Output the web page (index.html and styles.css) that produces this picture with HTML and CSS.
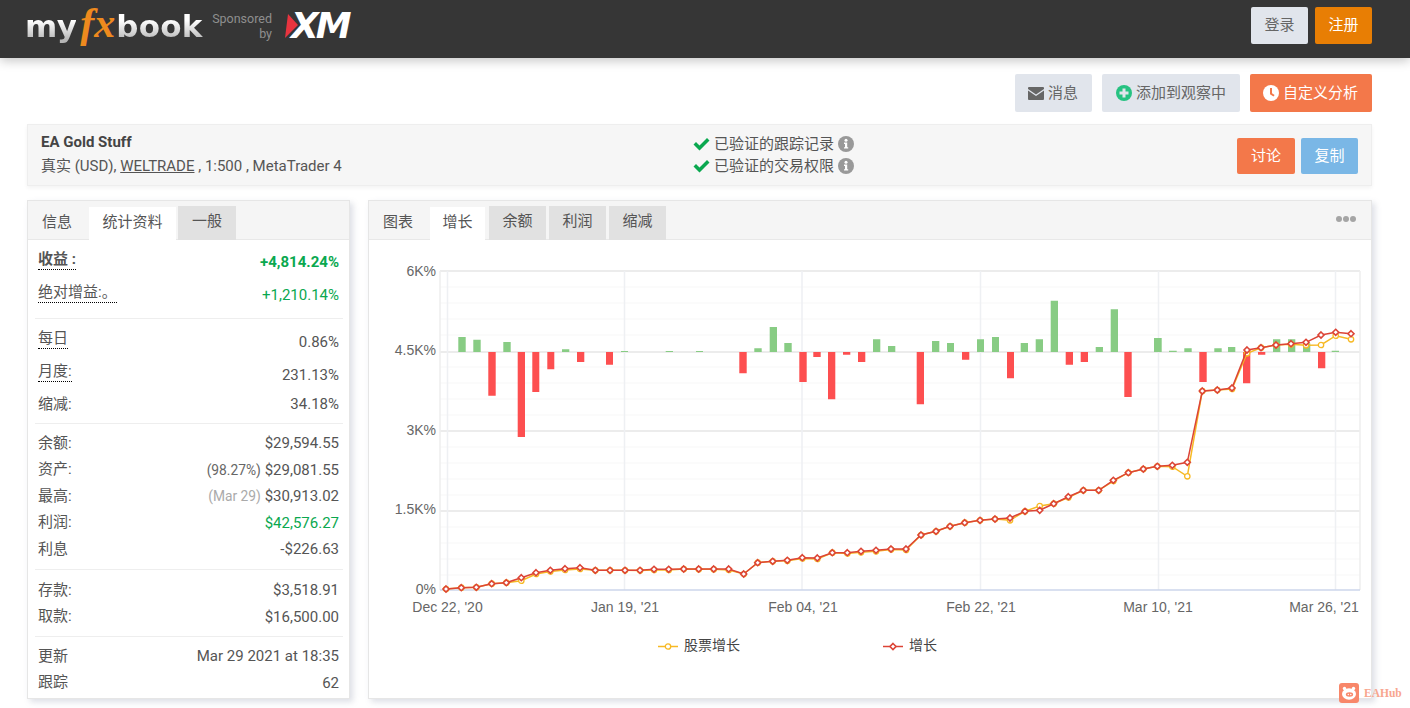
FILE: index.html
```html
<!DOCTYPE html>
<html lang="zh">
<head>
    <meta charset="UTF-8">
    <title>EA Gold Stuff - myfxbook</title>
    <link rel="stylesheet" href="styles.css">
</head>
<body>
    <header class="topbar">
        <div class="brand">
            <div class="logo"><span class="logo-word">my</span><span class="logo-fx">fx</span><span class="logo-word logo-book">book</span></div>
            <div class="sponsor">Sponsored<br>by</div>
            <div class="xm">
                <svg class="xm-mark" width="14" height="24" viewBox="0 0 14 24"><path d="M3 0 13 11 0 24Z" fill="#e8343f"/></svg>
                <span class="xm-text">XM</span>
            </div>
        </div>
        <div class="topbar-actions">
            <button class="btn btn-grey btn-top">登录</button>
            <button class="btn btn-amber btn-top">注册</button>
        </div>
    </header>

    <main class="page">
        <div class="actions">
            <button class="btn btn-grey btn-action">
                <svg width="16" height="13" viewBox="0 0 16 13"><path d="M1 0H15A1 1 0 0 1 16 1V2L8 7.4 0 2V1A1 1 0 0 1 1 0Z M0 3.6 8 9 16 3.6V12A1 1 0 0 1 15 13H1A1 1 0 0 1 0 12Z" fill="#666"/></svg>
                消息
            </button>
            <button class="btn btn-grey btn-action btn-watch">
                <svg width="16" height="16" viewBox="0 0 16 16"><circle cx="8" cy="8" r="8" fill="#26c281"/><path d="M6.5 3.5H9.5V6.5H12.5V9.5H9.5V12.5H6.5V9.5H3.5V6.5H6.5Z" fill="#e1e5ec"/></svg>
                添加到观察中
            </button>
            <button class="btn btn-coral btn-action">
                <svg width="16" height="16" viewBox="0 0 16 16"><circle cx="8" cy="8" r="8" fill="#fff"/><path d="M7 3H9V8.2L11.6 10 10.5 11.6 7 9.2Z" fill="#f3784a"/></svg>
                自定义分析
            </button>
        </div>

        <section class="summary">
            <div class="summary-info">
                <div class="summary-name">EA Gold Stuff</div>
                <div>真实 (USD), <span class="broker">WELTRADE</span> , 1:500 , MetaTrader 4</div>
            </div>
            <div class="summary-checks">
                <div class="check-row">
                    <svg width="17" height="14" viewBox="0 0 17 14"><path d="M0.5 7.5 3 5 6.5 8.5 14 1 16.5 3.5 6.5 13.5Z" fill="#0aa84f"/></svg>
                    已验证的跟踪记录
                    <svg class="info-icon" width="16" height="16" viewBox="0 0 16 16"><circle cx="8" cy="8" r="8" fill="#999"/><circle cx="8" cy="4.2" r="1.5" fill="#fff"/><path d="M6 6.6H9.2V11.2H10.2V12.6H6V11.2H7V8H6Z" fill="#fff"/></svg>
                </div>
                <div class="check-row">
                    <svg width="17" height="14" viewBox="0 0 17 14"><path d="M0.5 7.5 3 5 6.5 8.5 14 1 16.5 3.5 6.5 13.5Z" fill="#0aa84f"/></svg>
                    已验证的交易权限
                    <svg class="info-icon" width="16" height="16" viewBox="0 0 16 16"><circle cx="8" cy="8" r="8" fill="#999"/><circle cx="8" cy="4.2" r="1.5" fill="#fff"/><path d="M6 6.6H9.2V11.2H10.2V12.6H6V11.2H7V8H6Z" fill="#fff"/></svg>
                </div>
            </div>
            <div class="summary-buttons">
                <button class="btn btn-coral btn-small">讨论</button>
                <button class="btn btn-blue btn-small btn-copy">复制</button>
            </div>
        </section>

        <div class="columns">
            <section class="panel">
                <div class="tabs">
                    <span class="tab tab-plain">信息</span>
                    <span class="tab tab-active tab-stats">统计资料</span>
                    <span class="tab tab-grey tab-wide">一般</span>
                </div>
                <div class="stats">
                    <div class="group group-a">
                        <div class="row row-tall"><span class="label dotted strong">收益 :</span><span class="value up strong">+4,814.24%</span></div>
                        <div class="row row-tall"><span class="label dotted">绝对增益:。</span><span class="value up">+1,210.14%</span></div>
                    </div>
                    <div class="group group-b">
                        <div class="row row-tall"><span class="label dotted">每日</span><span class="value">0.86%</span></div>
                        <div class="row row-tall"><span class="label dotted">月度:</span><span class="value">231.13%</span></div>
                        <div class="row row-short"><span class="label">缩减:</span><span class="value">34.18%</span></div>
                    </div>
                    <div class="group group-c">
                        <div class="row"><span class="label">余额:</span><span class="value">$29,594.55</span></div>
                        <div class="row"><span class="label">资产:</span><span class="value"><small class="note">(98.27%)</small> $29,081.55</span></div>
                        <div class="row"><span class="label">最高:</span><span class="value"><small class="note note-light">(Mar 29)</small> $30,913.02</span></div>
                        <div class="row"><span class="label">利润:</span><span class="value up">$42,576.27</span></div>
                        <div class="row"><span class="label">利息</span><span class="value">-$226.63</span></div>
                    </div>
                    <div class="group group-d">
                        <div class="row"><span class="label">存款:</span><span class="value">$3,518.91</span></div>
                        <div class="row"><span class="label">取款:</span><span class="value">$16,500.00</span></div>
                    </div>
                    <div class="group group-e">
                        <div class="row"><span class="label">更新</span><span class="value">Mar 29 2021 at 18:35</span></div>
                        <div class="row"><span class="label">跟踪</span><span class="value">62</span></div>
                    </div>
                </div>
            </section>

            <section class="panel panel-chart">
                <div class="tabs">
                    <span class="tab tab-plain">图表</span>
                    <span class="tab tab-active tab-growth">增长</span>
                    <span class="tab tab-grey">余额</span>
                    <span class="tab tab-grey">利润</span>
                    <span class="tab tab-grey">缩减</span>
                    <span class="tab-more"><i></i><i></i><i></i></span>
                </div>
                <!-- the viewBox uses page coordinates, read straight off the reference -->
                <svg class="chart" viewBox="369 240 1002 458" width="1002" height="458">
                    <defs>
                        <marker id="dot-yellow" markerUnits="userSpaceOnUse" markerWidth="8" markerHeight="8" refX="4" refY="4">
                            <circle cx="4" cy="4" r="2.7" fill="#fff" stroke="#f7b924" stroke-width="1.3"/>
                        </marker>
                        <marker id="dot-red" markerUnits="userSpaceOnUse" markerWidth="10" markerHeight="10" refX="5" refY="5">
                            <path d="M5 2 8 5 5 8 2 5Z" fill="#fff" stroke="#dc4436" stroke-width="1.6"/>
                        </marker>
                    </defs>

                    <path class="grid-minor" d="M440 287H1360M440 303H1360M440 319H1360M440 335H1360M440 367H1360M440 383H1360M440 399H1360M440 415H1360M440 447H1360M440 463H1360M440 479H1360M440 495H1360M440 527H1360M440 543H1360M440 559H1360M440 575H1360"/>
                    <path class="grid-major" d="M440 271H1360M440 352H1360M440 431H1360M440 511H1360"/>
                    <path class="grid-edge" d="M440 271V590M1360 271V590"/>
                    <path class="grid-vert" d="M447.5 271V590M624.5 271V590M802 271V590M980.5 271V590M1158.5 271V590M1335.5 271V590"/>
                    <path class="grid-axis" d="M440 590H1360"/>

                    <path class="bars-up" d="M458.3 337H465.7V352H458.3ZM473.3 339.7H480.7V352H473.3ZM503.3 342H510.7V352H503.3ZM562 349.3H569.3V352H562ZM621 351H628V352H621ZM665.7 351H673V352H665.7ZM696 351H703V352H696ZM754.3 348.3H761.7V352H754.3ZM769.7 327H777V352H769.7ZM784.3 343H791.7V352H784.3ZM873 339.3H880.3V352H873ZM888 346H895.3V352H888ZM932 341H939.3V352H932ZM947 343H954V352H947ZM977 339.3H984V352H977ZM992 337H999V352H992ZM1020.7 343H1028V352H1020.7ZM1035.7 339.3H1043V352H1035.7ZM1050.7 300.7H1058V352H1050.7ZM1095.7 347H1103V352H1095.7ZM1110.7 309.3H1118V352H1110.7ZM1154 338H1161.7V352H1154ZM1169 350.7H1176.7V352H1169ZM1184.3 348.3H1191.7V352H1184.3ZM1214.3 348.3H1221.7V352H1214.3ZM1228 347H1235.3V352H1228ZM1273 339.3H1280.3V352H1273ZM1288 339.3H1295.3V352H1288ZM1303 343.3H1310.3V352H1303ZM1331.7 350.7H1339V352H1331.7Z"/>
                    <path class="bars-down" d="M488.3 352H495.7V395.7H488.3ZM517.7 352H525V437H517.7ZM532.3 352H539.3V392H532.3ZM547.3 352H554.3V369.3H547.3ZM577 352H584.3V362H577ZM606 352H613V364.7H606ZM739.3 352H746.7V373.3H739.3ZM799.3 352H806.7V382H799.3ZM813.3 352H820.7V357H813.3ZM828 352H835.3V399.3H828ZM843 352H850.3V354.7H843ZM858 352H865.3V362H858ZM916.7 352H924V404.3H916.7ZM962 352H969.3V359.7H962ZM1007 352H1014V378.3H1007ZM1065.7 352H1073V364.7H1065.7ZM1080.7 352H1088V362H1080.7ZM1124.3 352H1131.7V397H1124.3ZM1199.3 352H1206.7V382H1199.3ZM1243 352H1250.3V383.3H1243ZM1258 352H1265.3V354.7H1258ZM1318 352H1325.3V368.3H1318Z"/>

                    <polyline class="line-equity" points="446,589 461.3,587.7 476.3,587.3 491.7,583.7 506.3,582.7 521.3,580.7 536,574 550.3,571.5 565,570 580,569 595.3,570.3 610,570.3 625,570.3 640,570.5 654,570 668.7,570 683.7,569 698.7,569.3 713.7,569.3 728.7,570 743.7,574 757.7,562.7 772.7,561.3 787.3,560.8 802.3,558.5 817.3,559 832.3,552.7 847.3,553.5 861,552.3 876,551.3 891,549.5 906,550 921,535 936,531.3 950,526.3 964.7,522.7 980,520.3 995,519 1010,520.3 1025,511.3 1039.7,506 1053.7,503.7 1068.3,497.5 1083.3,490.3 1098.7,490.3 1113.3,481 1128.3,472.7 1143.3,469 1157.3,466.3 1172.3,466.7 1187.3,476.3 1202.3,391 1217.3,390 1232,389 1247,353.3 1261,347.7 1276,345 1291,344.3 1306,345.3 1321,345 1335.7,335.7 1351,339.3"/>
                    <polyline class="line-growth" points="446,589 461.3,587.7 476.3,587.3 491.7,583.7 506.3,582.7 521.3,577.7 536,572.7 550.3,570.3 565,568.7 580,567.7 595.3,570.3 610,570.3 625,570.3 640,570.3 654,569.3 668.7,569.3 683.7,569 698.7,569 713.7,569 728.7,569 743.7,574 757.7,562.7 772.7,561.3 787.3,560.3 802.3,557.7 817.3,558 832.3,552.7 847.3,552.7 861,551.3 876,550.3 891,549 906,549 921,535 936,531.3 950,526.3 964.7,522.7 980,520.3 995,519 1010,518 1025,511.3 1039.7,510.3 1053.7,503.7 1068.3,496.7 1083.3,490.3 1098.7,490.3 1113.3,480.3 1128.3,472.7 1143.3,469 1157.3,466.3 1172.3,465.3 1187.3,462.3 1202.3,391 1217.3,390 1232,388 1247,350 1261,347.7 1276,345 1291,343.7 1306,342.3 1321,335 1335.7,332.3 1351,333.7"/>

                    <g class="axis-y">
                        <text x="436" y="276">6K%</text>
                        <text x="436" y="355">4.5K%</text>
                        <text x="436" y="435">3K%</text>
                        <text x="436" y="514">1.5K%</text>
                        <text x="436" y="594">0%</text>
                    </g>
                    <g class="axis-x">
                        <text x="447.5" y="612">Dec 22, '20</text>
                        <text x="625" y="612">Jan 19, '21</text>
                        <text x="803" y="612">Feb 04, '21</text>
                        <text x="981" y="612">Feb 22, '21</text>
                        <text x="1158" y="612">Mar 10, '21</text>
                        <text x="1324" y="612">Mar 26, '21</text>
                    </g>

                    <polyline class="line-equity line-key" points="658,646.5 668,646.5 678,646.5"/>
                    <text class="legend" x="684" y="650">股票增长</text>
                    <polyline class="line-growth line-key" points="883,646.5 893,646.5 903,646.5"/>
                    <text class="legend" x="909" y="650">增长</text>
                </svg>
            </section>
        </div>
    </main>

    <div class="watermark">
        <svg width="20" height="20" viewBox="0 0 20 20">
            <rect width="20" height="20" rx="3" fill="#f8876a"/>
            <circle cx="5.5" cy="5.5" r="1.7" fill="#fff"/>
            <circle cx="14.5" cy="5.5" r="1.7" fill="#fff"/>
            <ellipse cx="10" cy="11" rx="7" ry="5.7" fill="#fff"/>
            <ellipse cx="10.5" cy="11.5" rx="3.6" ry="2.2" fill="#f8876a"/>
            <circle cx="9.3" cy="11.5" r=".7" fill="#fff"/>
            <circle cx="11.8" cy="11.5" r=".7" fill="#fff"/>
        </svg>
        <span>EAHub</span>
    </div>
</body>
</html>
```

FILE: styles.css
```css
/* Base */
* {
    margin: 0;
    padding: 0;
    box-sizing: border-box;
}

html, body {
    height: 708px;
    overflow: hidden;
}

body {
    position: relative;
    background: #fff;
    color: #555;
    font-family: Roboto, "Noto Sans CJK SC", sans-serif;
    font-size: 15px;
}

/* Buttons */
.btn {
    display: inline-flex;
    align-items: center;
    justify-content: center;
    gap: 4px;
    border: none;
    border-radius: 2px;
    font-family: Roboto, "Noto Sans CJK SC", sans-serif;
    font-size: 15px;
    line-height: 1;
}

.btn-grey { background: #e1e5ec; color: #666; }
.btn-amber { background: #e87e04; color: #fff; }
.btn-coral { background: #f3784a; color: #fff; }
.btn-blue { background: #7ab7e6; color: #fff; }

.btn-top {
    width: 57px;
    height: 37px;
}

.btn-action {
    height: 38px;
    padding: 0 14px 0 13px;
}

.btn-watch {
    padding-left: 14px;
}

.btn-small {
    width: 58px;
    height: 36px;
}

.btn-copy {
    width: 57px;
}

/* Top bar */
.topbar {
    display: flex;
    justify-content: space-between;
    align-items: flex-start;
    height: 58px;
    padding: 7px 38px 0 27px;
    background: #363636;
    box-shadow: 0 3px 10px rgba(0, 0, 0, 0.22);
}

.brand {
    display: flex;
    align-items: center;
    height: 37px;
}

.logo {
    display: flex;
    align-items: baseline;
    width: 178px;
    height: 44px;
    margin: -1px 0 0 -2px;
}

.logo-word {
    font-family: "DejaVu Sans", sans-serif;
    font-size: 31px;
    font-weight: 700;
    letter-spacing: -0.6px;
    background: linear-gradient(#fff 35%, #b5b5b5 90%);
    -webkit-background-clip: text;
    background-clip: text;
    color: transparent;
}

.logo-book {
    letter-spacing: 0.2px;
}

.logo-fx {
    margin: 0 -4px 0 -1px;
    padding: 0 5px 8px;
    font-family: "Liberation Serif", serif;
    font-size: 42px;
    font-style: italic;
    font-weight: 700;
    line-height: 41px;
    color: #ee8a1e;
}

.sponsor {
    width: 60px;
    margin-left: 9px;
    font-size: 12.5px;
    line-height: 15px;
    text-align: right;
    color: #8f8f8f;
}

.xm {
    display: flex;
    align-items: center;
    margin: 0 0 0 13px;
}

.xm-mark {
    margin-right: -8px;
}

.xm-text {
    font-family: "DejaVu Sans", sans-serif;
    font-size: 36px;
    font-style: italic;
    font-weight: 700;
    line-height: 1;
    letter-spacing: -3px;
    color: #fff;
}

.topbar-actions {
    display: flex;
    gap: 7px;
}

/* Page */
.page {
    padding: 16px 38px 0 27px;
}

.actions {
    display: flex;
    justify-content: flex-end;
    gap: 10px;
}

.summary {
    display: grid;
    grid-template-columns: 652px 1fr auto;
    align-items: center;
    height: 62px;
    margin-top: 12px;
    padding: 0 13px;
    background: #f6f6f6;
    border: 1px solid #eee;
    box-shadow: 0 2px 4px rgba(0, 0, 0, 0.05);
    line-height: 24px;
}

.summary-info {
    margin-top: -2px;
}

.summary-checks {
    margin-top: -1px;
}

.summary-name {
    font-weight: 700;
    color: #444;
}

.broker {
    text-decoration: underline;
}

.check-row {
    display: flex;
    align-items: center;
    gap: 4px;
    height: 22px;
}

.summary-buttons {
    display: flex;
    gap: 6px;
    margin-top: 2px;
}

/* Panels */
.columns {
    display: grid;
    grid-template-columns: 323px 1fr;
    gap: 18px;
    height: 499px;
    margin-top: 14px;
}

.panel {
    background: #fff;
    border: 1px solid #e6e6e6;
    box-shadow: 3px 3px 6px rgba(100, 110, 140, 0.22);
    overflow: hidden;
}

.tabs {
    display: flex;
    align-items: flex-end;
    height: 39px;
    background: #f5f5f5;
    border-bottom: 1px solid #e8e8e8;
}

.tab {
    display: flex;
    align-items: center;
    justify-content: center;
    width: 57px;
    height: 34px;
    margin-bottom: -1px;
    margin-right: 3px;
    padding-bottom: 7px;
    color: #555;
}

.tab-plain {
    width: 60px;
    height: 33px;
    margin-right: 1px;
    padding-right: 2px;
}

.tab-active {
    height: 33px;
    background: #fff;
}

.tab-stats {
    width: 87px;
    margin-right: 2px;
}

.tab-growth {
    width: 55px;
    margin-right: 4px;
}

.tab-grey {
    background: #e1e1e1;
}

.tab-wide {
    width: 58px;
}

.tab-more {
    display: flex;
    gap: 1px;
    margin: 0 15px 17px auto;
}

.tab-more i {
    width: 6px;
    height: 6px;
    border-radius: 50%;
    background: #a5a5a5;
}

/* Stats table */
.stats {
    padding: 0 6px 0 7px;
}

.group {
    border-bottom: 1px solid #eee;
}

.group-a { padding: 5px 0 7px; }
.group-b { padding: 5px 0 6px; }
.group-c { padding: 5px 0 7.5px; }
.group-d { padding: 6px 0 7px; }
.group-e { padding: 5px 0 0; border-bottom: none; }

.row {
    display: flex;
    justify-content: space-between;
    align-items: center;
    height: 26.5px;
    padding: 0 4px 0 3px;
}

.row-tall { height: 33px; }
.row-short { height: 27px; }

.label {
    padding-bottom: 2px;
}

.value {
    padding-top: 2px;
}

.group-a .value,
.row-short .value {
    padding-top: 0;
}

.row-short .label {
    padding-bottom: 3px;
}

.dotted {
    padding-bottom: 0;
    border-bottom: 1px dotted #000;
    line-height: 20px;
    margin-top: -4px;
}

.strong {
    font-weight: 700;
}

.up {
    color: #0aa84f;
}

.note {
    font-size: 13.8px;
    color: #666;
}

.note-light {
    color: #aaa;
}

/* Chart */
.chart {
    display: block;
}

.chart text {
    font-family: "Liberation Sans", "Noto Sans CJK SC", sans-serif;
    font-size: 14px;
    fill: #666;
}

.axis-y text {
    text-anchor: end;
}

.axis-x text {
    text-anchor: middle;
}

.chart .legend {
    font-family: "Noto Sans CJK SC", sans-serif;
    fill: #444;
}

.grid-minor { fill: none; stroke: #f7f7f7; stroke-width: 1; }
.grid-major { fill: none; stroke: #ececec; stroke-width: 2; }
.grid-edge { fill: none; stroke: #eee; stroke-width: 1.5; }
.grid-vert { fill: none; stroke: #eef0f3; stroke-width: 1.5; }
.grid-axis { fill: none; stroke: #ccd6eb; stroke-width: 1.5; }

.bars-up { fill: #88cc84; }
.bars-down { fill: #fd4f50; }

.line-equity {
    fill: none;
    stroke: #f7b924;
    stroke-width: 1.5;
    marker: url(#dot-yellow);
}

.line-growth {
    fill: none;
    stroke: #dc4436;
    stroke-width: 1.5;
    marker: url(#dot-red);
}

.line-key {
    marker: none;
    marker-mid: url(#dot-yellow);
}

.line-growth.line-key {
    marker-mid: url(#dot-red);
}

/* Watermark over the corner */
.watermark {
    position: absolute;
    left: 1339px;
    top: 683px;
    display: flex;
    align-items: center;
    gap: 5px;
    font-family: "Liberation Serif", serif;
    font-size: 11.5px;
    font-weight: 700;
    color: #f8a68f;
}
```
